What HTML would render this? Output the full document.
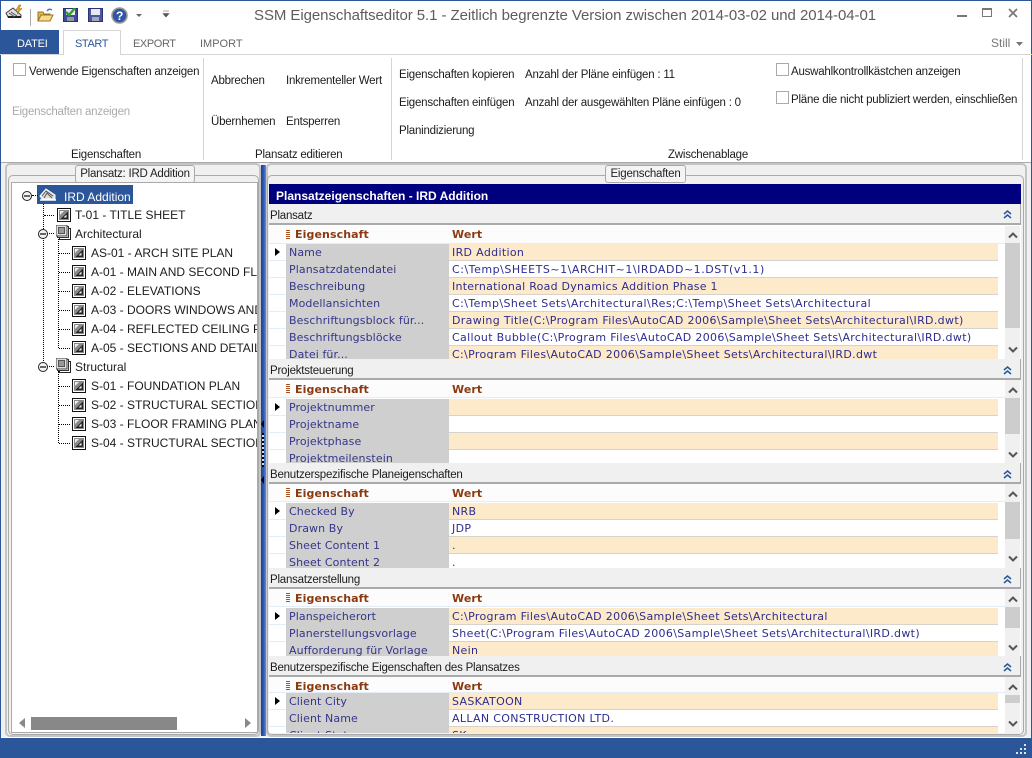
<!DOCTYPE html>
<html><head><meta charset="utf-8"><style>
html,body{margin:0;padding:0;width:1032px;height:758px;overflow:hidden;background:#fff}
*{box-sizing:border-box}
div,span,svg{position:absolute}
#a{left:0;top:0;width:1032px;height:758px;font:11.5px/16px "Liberation Sans",sans-serif;letter-spacing:-.22px;color:#1c1c1c;overflow:hidden;background:#fff}
.t{white-space:nowrap;height:16px}
.b{border:1px solid #aaa}
.s{left:269px;width:752px;overflow:hidden;background:#fff}
.c{left:0;top:0;width:752px;height:21px;background:#f0f0f0;border-right:1px solid #aaa;border-bottom:2px solid #aaa;padding:0 0 0 1px;line-height:25px;white-space:nowrap;color:#1c1c1c}
.h{left:0;top:21px;width:736px;height:18px;background:#fcfcfc;border-bottom:1px solid #e4ecf7;font:bold 11px/19px "DejaVu Sans",sans-serif;color:#8b3a10;letter-spacing:.1px}
.h i{position:absolute;left:17px;top:4px;width:4px;height:9px;background:repeating-linear-gradient(#a8501c 0 1px,#fff 1px 2px)}
.h b{position:absolute;top:0}
.r{left:0;width:729px;height:17px;font:11px/17px "DejaVu Sans",sans-serif;letter-spacing:.33px;color:#2d2d8f;white-space:nowrap}
.g{left:0;top:0;width:17px;height:17px;background:#fff;border-bottom:1px solid #e4ecf7}
.p{left:17px;top:0;width:163px;height:17px;background:#cfcfcf;padding-left:3px;overflow:hidden;color:#35358a;letter-spacing:.1px}
.v{left:180px;top:0;width:549px;height:17px;padding-left:3px;background:#fff;border-bottom:1px solid #d6d2cc;overflow:hidden;line-height:17px}
.o .v{background:#fdeaca}
.s5 .p,.s5 .v{line-height:18px}
.a{left:6px;top:4px;width:0;height:0;border-left:5px solid #000;border-top:4px solid transparent;border-bottom:4px solid transparent}
.sb{left:736px;width:15px;background:#f0f0f0}
.th{left:0;width:15px;background:#cdcdcd}
.dv{border-left:1px dotted #000;width:1px}
.dh{border-top:1px dotted #000;height:1px}
.ci{width:10px;height:10px;border:1px solid #222;border-radius:50%;background:#f4f4f4}
.ci:after{content:"";position:absolute;left:1px;top:3px;width:6px;height:2px;background:#666}
#tr{font-size:12px;letter-spacing:0}
</style></head><body>
<svg width="0" height="0" style="left:0;top:0"><defs>
<symbol id="sh" viewBox="0 0 14 14"><rect x=".5" y=".5" width="13" height="13" fill="#fff" stroke="#111"/><rect x="2" y="2" width="10" height="10" fill="#8a8a8a"/><path d="M3.5 11L11 3.5V11Z" fill="#222"/><path d="M6.5 9.5h3V6.5Z" fill="#eee"/><path d="M3 3h4L3 7Z" fill="#eee"/></symbol>
<symbol id="st" viewBox="0 0 15 15"><rect x="3.5" y="3.5" width="11" height="11" fill="#fff" stroke="#222"/><rect x="1.5" y="1.5" width="11" height="11" fill="#fff" stroke="#333"/><rect x="0" y="0" width="11" height="11" fill="#ddd" stroke="#444"/><rect x="2.5" y="2.5" width="6" height="6" fill="#999" stroke="#555"/></symbol>
<symbol id="up" viewBox="0 0 10 8"><path d="M1 6.5L5 2.5L9 6.5" fill="none" stroke="#555" stroke-width="2"/></symbol>
<symbol id="dn" viewBox="0 0 10 8"><path d="M1 1.5L5 5.5L9 1.5" fill="none" stroke="#555" stroke-width="2"/></symbol>
<symbol id="cc" viewBox="0 0 9 9"><path d="M1 4L4.5 1L8 4M1 8L4.5 5L8 8" fill="none" stroke="#2b579a" stroke-width="1.5"/></symbol>
</defs></svg>
<div id="a">
<!-- window borders -->
<div style="left:0;top:0;width:1032px;height:1px;background:#2b579a"></div>
<div style="left:0;top:0;width:1px;height:758px;background:#2b579a"></div>
<div style="left:1031px;top:0;width:1px;height:758px;background:#2b579a"></div>

<!-- QAT -->
<svg style="left:5px;top:4px" width="18" height="16" viewBox="0 0 18 16"><path d="M1 9L8 4L16 11L16 13L3 13Z" fill="#ddd" stroke="#444"/><path d="M3 13h13" stroke="#222" stroke-width="2"/><path d="M4 9l6 4M6 8l6 4" stroke="#555"/><path d="M14 1L11 6H14L12 10L17 4.5H14L16 1Z" fill="#e8a820" stroke="#a06a00" stroke-width=".5"/></svg>
<div style="left:30px;top:9px;width:1px;height:17px;background:#aaa"></div>
<svg style="left:37px;top:7px" width="17" height="16" viewBox="0 0 17 16"><path d="M1 14V5H6L7 7H13V14Z" fill="#e4b84a" stroke="#9a7420"/><path d="M1 14L4 8H16L13 14Z" fill="#f6dc8a" stroke="#9a7420"/><path d="M10 4Q12 1 15 3" fill="none" stroke="#4a7ab0" stroke-width="1.4"/></svg>
<svg style="left:63px;top:8px" width="15" height="14" viewBox="0 0 15 14"><rect x=".5" y=".5" width="14" height="13" fill="#3d4a9a" stroke="#2a3270"/><rect x="3" y="1" width="9" height="6" fill="#e8e8f4"/><rect x="4" y="9" width="7" height="4" fill="#999"/><path d="M3 4L6 7L12 0" fill="none" stroke="#2da02d" stroke-width="2.4"/></svg>
<svg style="left:88px;top:8px" width="15" height="14" viewBox="0 0 15 14"><rect x=".5" y=".5" width="14" height="13" fill="#4a56a8" stroke="#2a3270"/><rect x="3" y="1" width="9" height="6" fill="#e8e8f8"/><rect x="4" y="9" width="7" height="4" fill="#aaa"/></svg>
<svg style="left:111px;top:7px" width="17" height="17" viewBox="0 0 17 17"><circle cx="8.5" cy="8.5" r="7.5" fill="#2f55a8" stroke="#999" stroke-width="1.6"/><text x="8.5" y="13" text-anchor="middle" font-family="Liberation Sans" font-weight="bold" font-size="12" fill="#fff">?</text></svg>
<svg style="left:135px;top:13px" width="8" height="5" viewBox="0 0 8 5"><path d="M1 1H7L4 4Z" fill="#666"/></svg>
<svg style="left:162px;top:10px" width="8" height="8" viewBox="0 0 8 8"><path d="M1 1H7M1 3.5H7L4 7Z" fill="#555" stroke="#555" stroke-width=".6"/></svg>

<div class="t" style="left:254px;top:7px;font-size:15px;line-height:17px;height:17px;color:#5d5d5d;letter-spacing:-.065px">SSM Eigenschaftseditor 5.1 - Zeitlich begrenzte Version zwischen 2014-03-02 und 2014-04-01</div>
<div style="left:957px;top:15px;width:10px;height:2px;background:#777"></div>
<div style="left:982px;top:8px;width:10px;height:9px;border:1px solid #777;border-top-width:2px"></div>
<svg style="left:1008px;top:8px" width="10" height="10" viewBox="0 0 10 10"><path d="M1 1L9 9M9 1L1 9" stroke="#777" stroke-width="1.7"/></svg>

<!-- tabs -->
<div style="left:1px;top:30px;width:58px;height:25px;background:#2b579a"></div>
<div class="t" style="left:17px;top:36px;color:#fff;font-size:11px;letter-spacing:-.2px">DATEI</div>
<div style="left:0;top:54px;width:1032px;height:1px;background:#d4d4d4"></div>
<div style="left:63px;top:30px;width:58px;height:25px;background:#fff;border:1px solid #d4d4d4;border-bottom:none"></div>
<div class="t" style="left:75px;top:36px;color:#2b579a;font-size:11px;letter-spacing:-.4px">START</div>
<div class="t" style="left:133px;top:36px;color:#666;font-size:11px;letter-spacing:-.4px">EXPORT</div>
<div class="t" style="left:200px;top:36px;color:#666;font-size:11px;letter-spacing:0">IMPORT</div>
<div class="t" style="left:991px;top:35px;color:#777;font-size:12px;letter-spacing:0">Still</div>
<svg style="left:1016px;top:42px" width="7" height="4" viewBox="0 0 7 4"><path d="M0 0H7L3.5 4Z" fill="#777"/></svg>

<!-- ribbon -->
<div style="left:203px;top:58px;width:1px;height:102px;background:#d4d4d4"></div>
<div style="left:391px;top:58px;width:1px;height:102px;background:#d4d4d4"></div>
<div style="left:1022px;top:58px;width:1px;height:102px;background:#d4d4d4"></div>
<div style="left:13px;top:63px;width:13px;height:13px;border:1px solid #aaa;background:#fff"></div>
<div class="t" style="left:29px;top:64px">Verwende Eigenschaften anzeigen</div>
<div class="t" style="left:12px;top:104px;color:#aaa">Eigenschaften anzeigen</div>
<div class="t" style="left:71px;top:147px">Eigenschaften</div>
<div class="t" style="left:211px;top:73px">Abbrechen</div>
<div class="t" style="left:286px;top:73px">Inkrementeller Wert</div>
<div class="t" style="left:211px;top:114px">Übernhemen</div>
<div class="t" style="left:286px;top:114px">Entsperren</div>
<div class="t" style="left:255px;top:147px">Plansatz editieren</div>
<div class="t" style="left:399px;top:67px">Eigenschaften kopieren</div>
<div class="t" style="left:525px;top:67px">Anzahl der Pläne einfügen : 11</div>
<div class="t" style="left:399px;top:95px">Eigenschaften einfügen</div>
<div class="t" style="left:525px;top:95px">Anzahl der ausgewählten Pläne einfügen : 0</div>
<div class="t" style="left:399px;top:123px">Planindizierung</div>
<div class="t" style="left:668px;top:147px">Zwischenablage</div>
<div style="left:776px;top:63px;width:13px;height:13px;border:1px solid #aaa;background:#fff"></div>
<div class="t" style="left:791px;top:64px">Auswahlkontrollkästchen anzeigen</div>
<div style="left:776px;top:91px;width:13px;height:13px;border:1px solid #aaa;background:#fff"></div>
<div class="t" style="left:791px;top:92px">Pläne die nicht publiziert werden, einschließen</div>

<!-- body bg -->
<div style="left:1px;top:162px;width:1030px;height:576px;background:#f0f0f0;border-top:1px solid #aaa"></div>
<div style="left:1px;top:737px;width:1030px;height:1px;background:#fff"></div>

<!-- left frames -->
<div class="b" style="left:5px;top:163px;width:256px;height:574px;border-radius:5px;border-width:2px;border-color:#c4c4c4"></div>
<div class="b" style="left:8px;top:175px;width:251px;height:560px;border-radius:5px"></div>
<div id="tr" style="left:11px;top:182px;width:247px;height:551px;background:#fff;border:1px solid #aaa;overflow:hidden">
 <div style="left:25px;top:2px;width:96px;height:19px;background:#2b579a"></div>
 <div class="t" style="left:52px;top:6px;color:#fff">IRD Addition</div>
 <div class="t" style="left:63px;top:24px">T-01 - TITLE SHEET</div>
 <div class="t" style="left:63px;top:43px">Architectural</div>
 <div class="t" style="left:79px;top:62px">AS-01 - ARCH SITE PLAN</div>
 <div class="t" style="left:79px;top:81px">A-01 - MAIN AND SECOND FLOOR PLAN</div>
 <div class="t" style="left:79px;top:100px">A-02 - ELEVATIONS</div>
 <div class="t" style="left:79px;top:119px">A-03 - DOORS WINDOWS AND INTERIOR</div>
 <div class="t" style="left:79px;top:138px">A-04 - REFLECTED CEILING PLAN</div>
 <div class="t" style="left:79px;top:157px">A-05 - SECTIONS AND DETAILS</div>
 <div class="t" style="left:63px;top:176px">Structural</div>
 <div class="t" style="left:79px;top:195px">S-01 - FOUNDATION PLAN</div>
 <div class="t" style="left:79px;top:214px">S-02 - STRUCTURAL SECTIONS</div>
 <div class="t" style="left:79px;top:233px">S-03 - FLOOR FRAMING PLAN</div>
 <div class="t" style="left:79px;top:252px">S-04 - STRUCTURAL SECTIONS</div>

 <div class="dv" style="left:31px;top:21px;height:159px"></div>
 <div class="dv" style="left:46px;top:56px;height:109px"></div>
 <div class="dv" style="left:46px;top:188px;height:72px"></div>
 <div class="dh" style="left:20px;top:12px;width:6px"></div>
 <div class="dh" style="left:32px;top:32px;width:10px"></div>
 <div class="dh" style="left:35px;top:50px;width:7px"></div>
 <div class="dh" style="left:35px;top:183px;width:7px"></div>
 <div class="dh" style="left:47px;top:70px;width:11px"></div>
 <div class="dh" style="left:47px;top:89px;width:11px"></div>
 <div class="dh" style="left:47px;top:108px;width:11px"></div>
 <div class="dh" style="left:47px;top:127px;width:11px"></div>
 <div class="dh" style="left:47px;top:146px;width:11px"></div>
 <div class="dh" style="left:47px;top:165px;width:11px"></div>
 <div class="dh" style="left:47px;top:203px;width:11px"></div>
 <div class="dh" style="left:47px;top:222px;width:11px"></div>
 <div class="dh" style="left:47px;top:241px;width:11px"></div>
 <div class="dh" style="left:47px;top:260px;width:11px"></div>
 <div class="ci" style="left:10px;top:8px"></div>
 <div class="ci" style="left:26px;top:46px"></div>
 <div class="ci" style="left:26px;top:179px"></div>

 <svg style="left:27px;top:4px" width="18" height="15" viewBox="0 0 18 15"><path d="M1 9L7 2L16 8V12H3Z" fill="#ddd" stroke="#fff"/><path d="M3 9L7 4L14 9M5 11L8 6L13 11" fill="none" stroke="#555"/><path d="M1 13H17" stroke="#fff" stroke-width="1.5"/></svg>
 <svg style="left:45px;top:25px" width="14" height="14"><use href="#sh"/></svg>
 <svg style="left:44px;top:42px" width="15" height="15"><use href="#st"/></svg>
 <svg style="left:60px;top:63px" width="14" height="14"><use href="#sh"/></svg>
 <svg style="left:60px;top:82px" width="14" height="14"><use href="#sh"/></svg>
 <svg style="left:60px;top:101px" width="14" height="14"><use href="#sh"/></svg>
 <svg style="left:60px;top:120px" width="14" height="14"><use href="#sh"/></svg>
 <svg style="left:60px;top:139px" width="14" height="14"><use href="#sh"/></svg>
 <svg style="left:60px;top:158px" width="14" height="14"><use href="#sh"/></svg>
 <svg style="left:44px;top:175px" width="15" height="15"><use href="#st"/></svg>
 <svg style="left:60px;top:196px" width="14" height="14"><use href="#sh"/></svg>
 <svg style="left:60px;top:215px" width="14" height="14"><use href="#sh"/></svg>
 <svg style="left:60px;top:234px" width="14" height="14"><use href="#sh"/></svg>
 <svg style="left:60px;top:253px" width="14" height="14"><use href="#sh"/></svg>

 <svg style="left:7px;top:535px" width="7" height="10" viewBox="0 0 7 10"><path d="M6 0V10L0 5Z" fill="#888"/></svg>
 <div style="left:19px;width:146px;height:13px;background:#888;top:534px"></div>
 <svg style="left:233px;top:535px" width="7" height="10" viewBox="0 0 7 10"><path d="M0 0V10L6 5Z" fill="#888"/></svg>
</div>
<div class="b" style="left:75px;top:165px;width:120px;height:18px;border-radius:3px;background:#f4f4f4;text-align:center;line-height:17px;white-space:nowrap;color:#222">Plansatz: IRD Addition</div>

<!-- splitter -->
<div style="left:261px;top:165px;width:5px;height:571px;background:linear-gradient(90deg,#1e3f8a,#2f5fc0 60%,#6a8fd0)"></div>
<div style="left:261px;top:420px;width:0;height:0;border-right:3px solid #000;border-top:4px solid transparent;border-bottom:4px solid transparent"></div>
<div style="left:262px;top:433px;width:2px;height:34px;background:repeating-linear-gradient(#000 0 2px,#cfd8f0 2px 4px)"></div>
<div style="left:261px;top:476px;width:0;height:0;border-right:3px solid #000;border-top:4px solid transparent;border-bottom:4px solid transparent"></div>

<!-- right frames -->
<div class="b" style="left:266px;top:163px;width:761px;height:574px;border-radius:5px;border-width:2px;border-color:#c4c4c4"></div>
<div class="b" style="left:267px;top:175px;width:757px;height:560px;border-radius:5px"></div>
<div style="left:269px;top:184px;width:752px;height:20px;background:#00007f"></div>
<div class="t" style="left:276px;top:188px;color:#fff;font-weight:bold;font-size:12px;letter-spacing:0">Plansatzeigenschaften - IRD Addition</div>
<div class="b" style="left:605px;top:165px;width:81px;height:18px;border-radius:3px;background:#f4f4f4;text-align:center;line-height:17px;white-space:nowrap;color:#222">Eigenschaften</div>

<!-- section 1 -->
<div class="s" style="top:204px;height:155px">
 <div class="c" style="top:0;line-height:24px">Plansatz</div><svg style="left:734px;top:6px" width="9" height="9"><use href="#cc"/></svg>
 <div class="h" style="top:22px;height:18px;line-height:17px"><i></i><b style="left:26px">Eigenschaft</b><b style="left:183px">Wert</b></div>
 <div class="r o" style="top:40px"><div class="g"></div><div class="a"></div><div class="p">Name</div><div class="v">IRD Addition</div></div>
 <div class="r" style="top:57px"><div class="g"></div><div class="p">Plansatzdatendatei</div><div class="v" style="letter-spacing:.53px">C:\Temp\SHEETS~1\ARCHIT~1\IRDADD~1.DST(v1.1)</div></div>
 <div class="r o" style="top:74px"><div class="g"></div><div class="p">Beschreibung</div><div class="v" style="letter-spacing:.25px">International Road Dynamics Addition Phase 1</div></div>
 <div class="r" style="top:91px"><div class="g"></div><div class="p">Modellansichten</div><div class="v" style="letter-spacing:.42px">C:\Temp\Sheet Sets\Architectural\Res;C:\Temp\Sheet Sets\Architectural</div></div>
 <div class="r o" style="top:108px"><div class="g"></div><div class="p">Beschriftungsblock für...</div><div class="v">Drawing Title(C:\Program Files\AutoCAD 2006\Sample\Sheet Sets\Architectural\IRD.dwt)</div></div>
 <div class="r" style="top:125px"><div class="g"></div><div class="p">Beschriftungsblöcke</div><div class="v">Callout Bubble(C:\Program Files\AutoCAD 2006\Sample\Sheet Sets\Architectural\IRD.dwt)</div></div>
 <div class="r o" style="top:142px"><div class="g"></div><div class="p">Datei für...</div><div class="v">C:\Program Files\AutoCAD 2006\Sample\Sheet Sets\Architectural\IRD.dwt</div></div>
 <div class="sb" style="top:22px;height:133px"><svg style="left:3px;top:5px" width="10" height="8"><use href="#up"/></svg><div class="th" style="top:17px;height:85px"></div><svg style="left:3px;top:120px" width="10" height="8"><use href="#dn"/></svg></div>
</div>

<!-- section 2 -->
<div class="s" style="top:359px;height:104px">
 <div class="c">Projektsteuerung</div><svg style="left:734px;top:7px" width="9" height="9"><use href="#cc"/></svg>
 <div class="h"><i></i><b style="left:26px">Eigenschaft</b><b style="left:183px">Wert</b></div>
 <div class="r o" style="top:40px"><div class="g"></div><div class="a"></div><div class="p">Projektnummer</div><div class="v"></div></div>
 <div class="r" style="top:57px"><div class="g"></div><div class="p">Projektname</div><div class="v"></div></div>
 <div class="r o" style="top:74px"><div class="g"></div><div class="p">Projektphase</div><div class="v"></div></div>
 <div class="r" style="top:91px"><div class="g"></div><div class="p">Projektmeilenstein</div><div class="v"></div></div>
 <div class="sb" style="top:21px;height:83px"><svg style="left:3px;top:6px" width="10" height="8"><use href="#up"/></svg><div class="th" style="top:18px;height:36px"></div><svg style="left:3px;top:71px" width="10" height="8"><use href="#dn"/></svg></div>
</div>

<!-- section 3 -->
<div class="s" style="top:463px;height:105px">
 <div class="c">Benutzerspezifische Planeigenschaften</div><svg style="left:734px;top:7px" width="9" height="9"><use href="#cc"/></svg>
 <div class="h"><i></i><b style="left:26px">Eigenschaft</b><b style="left:183px">Wert</b></div>
 <div class="r o" style="top:40px"><div class="g"></div><div class="a"></div><div class="p">Checked By</div><div class="v">NRB</div></div>
 <div class="r" style="top:57px"><div class="g"></div><div class="p">Drawn By</div><div class="v">JDP</div></div>
 <div class="r o" style="top:74px"><div class="g"></div><div class="p">Sheet Content 1</div><div class="v">.</div></div>
 <div class="r" style="top:91px"><div class="g"></div><div class="p">Sheet Content 2</div><div class="v">.</div></div>
 <div class="sb" style="top:21px;height:84px"><svg style="left:3px;top:6px" width="10" height="8"><use href="#up"/></svg><div class="th" style="top:18px;height:37px"></div><svg style="left:3px;top:71px" width="10" height="8"><use href="#dn"/></svg></div>
</div>

<!-- section 4 -->
<div class="s" style="top:568px;height:88px">
 <div class="c">Plansatzerstellung</div><svg style="left:734px;top:7px" width="9" height="9"><use href="#cc"/></svg>
 <div class="h"><i></i><b style="left:26px">Eigenschaft</b><b style="left:183px">Wert</b></div>
 <div class="r o" style="top:40px"><div class="g"></div><div class="a"></div><div class="p">Planspeicherort</div><div class="v">C:\Program Files\AutoCAD 2006\Sample\Sheet Sets\Architectural</div></div>
 <div class="r" style="top:57px"><div class="g"></div><div class="p">Planerstellungsvorlage</div><div class="v">Sheet(C:\Program Files\AutoCAD 2006\Sample\Sheet Sets\Architectural\IRD.dwt)</div></div>
 <div class="r o" style="top:74px"><div class="g"></div><div class="p">Aufforderung für Vorlage</div><div class="v">Nein</div></div>
 <div class="sb" style="top:21px;height:67px"><svg style="left:3px;top:6px" width="10" height="8"><use href="#up"/></svg><div class="th" style="top:18px;height:21px"></div><svg style="left:3px;top:55px" width="10" height="8"><use href="#dn"/></svg></div>
</div>

<!-- section 5 -->
<div class="s s5" style="top:656px;height:77px">
 <div class="c">Benutzerspezifische Eigenschaften des Plansatzes</div><svg style="left:734px;top:7px" width="9" height="9"><use href="#cc"/></svg>
 <div class="h" style="height:16px"><i></i><b style="left:26px">Eigenschaft</b><b style="left:183px">Wert</b></div>
 <div class="r o" style="top:37px"><div class="g"></div><div class="a"></div><div class="p">Client City</div><div class="v">SASKATOON</div></div>
 <div class="r" style="top:54px"><div class="g"></div><div class="p">Client Name</div><div class="v">ALLAN CONSTRUCTION LTD.</div></div>
 <div class="r o" style="top:71px"><div class="g"></div><div class="p">Client State</div><div class="v">SK</div></div>
 <div class="sb" style="top:21px;height:56px"><svg style="left:3px;top:6px" width="10" height="8"><use href="#up"/></svg><div class="th" style="top:18px;height:8px"></div><svg style="left:3px;top:43px" width="10" height="8"><use href="#dn"/></svg></div>
</div>

<!-- status -->
<div style="left:0;top:738px;width:1032px;height:20px;background:#2b579a"></div>
<svg style="left:1014px;top:743px" width="14" height="13" viewBox="0 0 14 13"><g fill="#dfe6f2"><rect x="10" y="1" width="2" height="2"/><rect x="6" y="5" width="2" height="2"/><rect x="10" y="5" width="2" height="2"/><rect x="2" y="9" width="2" height="2"/><rect x="6" y="9" width="2" height="2"/><rect x="10" y="9" width="2" height="2"/></g></svg>
</div>
</body></html>
